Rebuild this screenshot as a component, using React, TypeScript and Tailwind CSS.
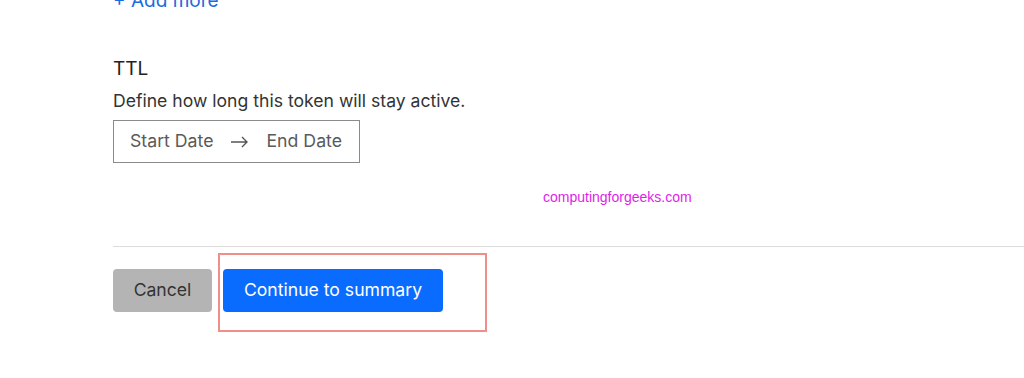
export default function App() {
  return (
    <div className="relative w-[1024px] h-[378px] overflow-hidden bg-white font-['Inter',sans-serif]">
      {/* form section */}
      <div className="pl-[113px]">
        <button className="-mt-[10px] block text-[19px] leading-[22px] text-[#1a6be0]">
          + Add more
        </button>

        <h3 className="mt-[46px] text-[19px] leading-[22px] text-[#222]">TTL</h3>
        <p className="mt-[11px] text-[17.6px] leading-[20px] text-[#333]">
          Define how long this token will stay active.
        </p>

        <div className="mt-[9px] flex h-[43px] w-[247px] items-center border border-[#8a8a8a] pl-[16px] text-[17.7px] text-[#5a5a5a]">
          <span>Start Date</span>
          <svg className="mx-[17px]" width="19" height="12" viewBox="0 0 19 12" fill="none" stroke="#555" strokeWidth="1.4">
            <path d="M1 6h16M12 1l5 5-5 5" />
          </svg>
          <span>End Date</span>
        </div>
      </div>

      {/* watermark */}
      <span className="absolute left-[543px] top-[187px] font-['Liberation_Sans',Arial,sans-serif] text-[14px] text-[#e01ee8]">
        computingforgeeks.com
      </span>

      {/* footer */}
      <div className="ml-[113px] mt-[83px] h-px bg-[#dcdcdc]" />
      <div className="flex gap-[11px] pl-[113px] pt-[22px]">
        <button className="h-[43px] w-[99px] rounded-[4px] bg-[#b4b4b4] text-[17.6px] text-[#333]">
          Cancel
        </button>
        <div className="relative">
          <button className="h-[43px] w-[220px] rounded-[4px] bg-[#0a6cff] text-[17.6px] text-white">
            Continue to summary
          </button>
          <div className="pointer-events-none absolute -bottom-[20px] -left-[5px] -right-[44px] -top-[16px] border-2 border-[#ef8f8c]" />
        </div>
      </div>
    </div>
  );
}
